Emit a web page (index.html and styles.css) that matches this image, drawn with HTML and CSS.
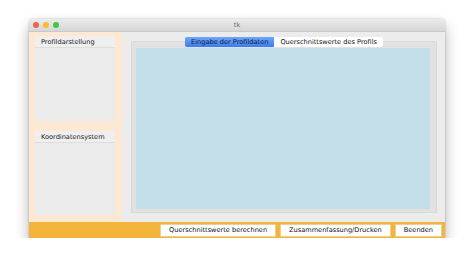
FILE: index.html
```html
<!DOCTYPE html>
<html lang="de">
  <head>
    <meta charset="UTF-8" />
    <meta name="viewport" content="width=device-width, initial-scale=1.0" />
    <title>tk</title>
    <link rel="stylesheet" href="styles.css">
  </head>
  <body>
    <div class="window">
      <div class="titlebar">
        <div class="lights">
          <span class="light red"></span>
          <span class="light yellow"></span>
          <span class="light green"></span>
        </div>
        <div class="title">tk</div>
      </div>
      <div class="main">
        <div class="side">
          <div class="group">
            <div class="group-label">Profildarstellung</div>
          </div>
          <div class="group">
            <div class="group-label">Koordinatensystem</div>
          </div>
        </div>
        <div class="work">
          <div class="notebook">
            <div class="tabs">
              <div class="tab selected">Eingabe der Profildaten</div>
              <div class="tab">Querschnittswerte des Profils</div>
            </div>
            <div class="canvas"></div>
          </div>
        </div>
      </div>
      <div class="footer">
        <button class="btn">Querschnittswerte berechnen</button>
        <button class="btn">Zusammenfassung/Drucken</button>
        <button class="btn">Beenden</button>
      </div>
    </div>
  </body>
</html>
```
FILE: styles.css
```css
body {
  margin: 0;
  background-color: #fff;
  font-family: 'DejaVu Sans', 'Liberation Sans', sans-serif;
  font-size: 6.6px;
  color: #222;
}
.window {
  margin: 19px 0 0 29px;
  width: 416px;
  height: 219px;
  background-color: #ececec;
  border-radius: 4px 4px 0 0;
  box-shadow: 0 7px 14px rgba(0, 0, 0, 0.3), 0 0 2px rgba(0, 0, 0, 0.25);
  display: flex;
  flex-direction: column;
  overflow: hidden;
}
.titlebar {
  position: relative;
  height: 12px;
  background: linear-gradient(#ebebeb, #d6d6d6);
  border-bottom: 1px solid #c8c8c8;
  display: flex;
  align-items: center;
  justify-content: center;
}
.lights {
  position: absolute;
  left: 4px;
  top: 3px;
  display: flex;
  gap: 4px;
}
.light {
  width: 6px;
  height: 6px;
  border-radius: 50%;
}
.red {
  background-color: #f25f57;
}
.yellow {
  background-color: #f8bc2f;
}
.green {
  background-color: #3ec744;
}
.title {
  font-size: 6.5px;
  color: #666;
}
.main {
  flex: 1;
  display: flex;
}
.side {
  width: 80px;
  padding: 4px 7px 7px 6px;
  background-color: #fde9d3;
  display: flex;
  flex-direction: column;
  gap: 10px;
}
.group {
  flex: 1;
  background-color: #ebebeb;
}
.group-label {
  height: 11px;
  line-height: 12px;
  padding-left: 6px;
  background-color: #efefef;
  border-bottom: 1px solid #dedede;
  color: #1a1a1a;
}
.work {
  flex: 1;
  padding: 6px 8px 10px 9px;
}
.notebook {
  position: relative;
  height: calc(100% - 13px);
  margin-top: 3px;
  background-color: #e2e2e2;
  border: 1px solid #d9d9d9;
  padding: 6px 6px 3px 4px;
}
.tabs {
  position: absolute;
  top: -5px;
  left: 0;
  right: 0;
  display: flex;
  justify-content: center;
}
.tab {
  height: 10px;
  line-height: 10px;
  padding: 0 6px;
  background-color: #fff;
  border-radius: 0 2px 2px 0;
  color: #111;
}
.tab.selected {
  background: linear-gradient(#6ea6fa, #3d7cec);
  border-radius: 2px 0 0 2px;
  color: #0c1a3a;
}
.canvas {
  height: 100%;
  background-color: #c3dde9;
}
.footer {
  height: 16px;
  background-color: #f3b43c;
  display: flex;
  align-items: center;
  justify-content: flex-end;
  gap: 4px;
  padding-right: 3px;
}
.btn {
  height: 13px;
  padding: 0 8px;
  background-color: #fff;
  border: 1px solid #e8cf98;
  border-radius: 1px;
  font-family: 'DejaVu Sans', 'Liberation Sans', sans-serif;
  font-size: 6.6px;
  color: #111;
  line-height: 11px;
}
```
